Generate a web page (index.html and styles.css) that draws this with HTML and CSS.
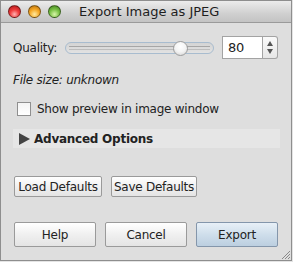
FILE: index.html
```html
<!DOCTYPE html>
<html lang="en">
<head>
    <meta charset="UTF-8">
    <title>Export Image as JPEG</title>
    <link rel="stylesheet" href="styles.css">
</head>
<body>
    <div class="window">
        <div class="titlebar">
            <div class="lights">
                <span class="light red"></span>
                <span class="light yellow"></span>
                <span class="light green"></span>
            </div>
            <div class="title">Export Image as JPEG</div>
        </div>

        <div class="content">
            <div class="quality-row">
                <label class="label">Quality:</label>
                <div class="slider">
                    <div class="groove"></div>
                    <div class="knob"></div>
                </div>
                <div class="spinner">
                    <div class="spin-field">80</div>
                    <div class="spin-arrows">
                        <span class="up"></span>
                        <span class="down"></span>
                    </div>
                </div>
            </div>

            <div class="filesize">File size: unknown</div>

            <div class="check-row">
                <span class="checkbox"></span>
                <span>Show preview in image window</span>
            </div>

            <div class="advanced">
                <span class="arrow"></span>
                <span>Advanced Options</span>
            </div>

            <div class="defaults">
                <button class="btn small load">Load Defaults</button>
                <button class="btn small save">Save Defaults</button>
            </div>

            <div class="actions">
                <button class="btn big">Help</button>
                <button class="btn big">Cancel</button>
                <button class="btn big primary">Export</button>
            </div>
        </div>

        <svg class="grip" width="9" height="9" viewBox="0 0 9 9">
            <path d="M1 9 L9 1 M4 9 L9 4 M7 9 L9 7" stroke="#8a8a8a" stroke-width="1" fill="none"/>
        </svg>
    </div>
</body>
</html>
```

FILE: styles.css
```css
body {
    margin: 0;
    padding: 0;
    background-color: #e4e4e4;
    font-family: 'DejaVu Sans', 'Liberation Sans', sans-serif;
    font-size: 12px;
    letter-spacing: -0.25px;
    color: #222;
}

.window {
    position: relative;
    width: 290px;
    height: 259px;
    border: 1px solid #8e8e8e;
    background-color: #dedede;
    display: flex;
    flex-direction: column;
}

.titlebar {
    height: 21px;
    border-bottom: 1px solid #9a9a9a;
    background: linear-gradient(#ececec, #d0d0d0 60%, #c3c3c3);
    display: flex;
    align-items: center;
}

.lights {
    display: flex;
    gap: 7px;
    padding-left: 7px;
}

.light {
    width: 11px;
    height: 11px;
    border-radius: 50%;
    border: 1px solid rgba(0, 0, 0, 0.45);
}

.red {
    background: radial-gradient(circle at 50% 75%, #ffb3b3, #f03c3c 45%, #a81414 100%);
}

.yellow {
    background: radial-gradient(circle at 50% 75%, #ffeaa0, #f5a623 50%, #b06b0c 100%);
}

.green {
    background: radial-gradient(circle at 50% 75%, #d8f5a8, #77c043 50%, #3f7d1c 100%);
}

.title {
    margin-left: 18px;
    font-size: 13px;
    letter-spacing: 0;
    color: #1e1e1e;
}

.content {
    padding: 13px 13px 0 12px;
    display: flex;
    flex-direction: column;
}

.quality-row {
    display: flex;
    align-items: center;
    height: 23px;
}

.label {
    width: 52px;
}

.slider {
    position: relative;
    width: 148px;
    height: 10px;
    border: 1px solid #a8bccf;
    border-radius: 6px;
    background: linear-gradient(#d4d4d4, #e2e2e2);
}

.groove {
    margin: 3px 3px 0;
    height: 2px;
    border-top: 1px solid #a6a6a6;
    border-bottom: 1px solid #bdbdbd;
}

.knob {
    position: absolute;
    left: 107px;
    top: -2px;
    width: 13px;
    height: 13px;
    border-radius: 50%;
    background: radial-gradient(circle at 50% 35%, #ffffff, #f4f4f4 50%, #cfcfcf);
    border: 1px solid #9c9c9c;
}

.spinner {
    display: flex;
    margin-left: 8px;
    height: 23px;
}

.spin-field {
    width: 34px;
    padding-left: 5px;
    line-height: 21px;
    background-color: #fff;
    border: 1px solid #a3a3a3;
    font-size: 13px;
}

.spin-arrows {
    width: 14px;
    border: 1px solid #a3a3a3;
    border-left: none;
    border-radius: 0 3px 3px 0;
    background: linear-gradient(#fafafa, #e6e6e6);
    display: flex;
    flex-direction: column;
    align-items: center;
    justify-content: center;
    gap: 3px;
}

.up, .down {
    width: 0;
    height: 0;
    border-left: 3px solid transparent;
    border-right: 3px solid transparent;
}

.up {
    border-bottom: 5px solid #555;
}

.down {
    border-top: 5px solid #555;
}

.filesize {
    margin-top: 14px;
    font-style: italic;
    height: 16px;
}

.check-row {
    margin-top: 13px;
    display: flex;
    align-items: center;
    gap: 6px;
    padding-left: 4px;
}

.checkbox {
    width: 12px;
    height: 12px;
    border: 1px solid #8f8f8f;
    background: linear-gradient(#f4f4f4, #ffffff);
}

.advanced {
    margin-top: 13px;
    margin-right: -2px;
    height: 19px;
    padding-left: 6px;
    background-color: #e6e6e6;
    display: flex;
    align-items: center;
    gap: 4px;
    font-weight: bold;
}

.arrow {
    width: 0;
    height: 0;
    border-top: 6px solid transparent;
    border-bottom: 6px solid transparent;
    border-left: 11px solid #444;
}

.defaults {
    margin-top: 28px;
    display: flex;
    gap: 9px;
    padding-left: 1px;
}

.btn {
    font-family: 'DejaVu Sans', 'Liberation Sans', sans-serif;
    font-size: 12px;
    letter-spacing: -0.25px;
    color: #222;
    border: 1px solid #9a9a9a;
    border-radius: 2px;
    background: linear-gradient(#ffffff, #f0f0f0 50%, #e4e4e4);
    padding: 0;
}

.small {
    height: 21px;
}

.load {
    width: 88px;
}

.save {
    width: 86px;
}

.actions {
    margin-top: 25px;
    display: flex;
    gap: 9px;
    padding-left: 1px;
}

.big {
    width: 83px;
    height: 25px;
}

.primary {
    border-color: #8496ab;
    background: linear-gradient(#e8f0f7, #cfdeeb 50%, #bccfe0);
}

.grip {
    position: absolute;
    right: 1px;
    bottom: 1px;
}
```
